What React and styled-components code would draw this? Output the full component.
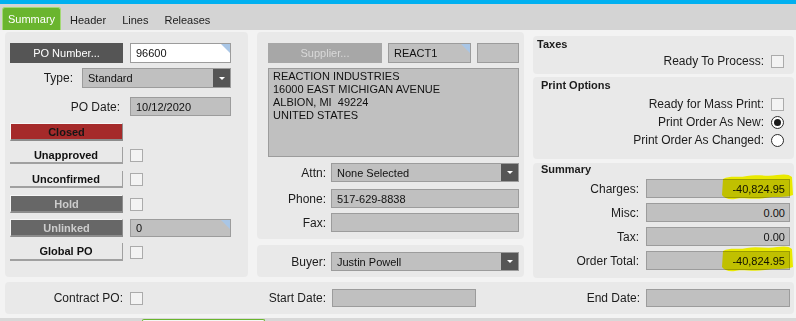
import React from "react";
import styled, { createGlobalStyle, css } from "styled-components";

const GlobalStyle = createGlobalStyle`
  html, body { margin: 0; padding: 0; background: #f3f3f3; overflow: hidden; }
  body { font-family: "Liberation Sans", Arial, sans-serif; color: #1c1c1c; }
  * { box-sizing: border-box; }
`;

const Page = styled.div`
  width: 796px;
  height: 321px;
  display: flex;
  flex-direction: column;
  background: #f3f3f3;
  overflow: hidden;
`;

const TopStripe = styled.div`
  flex: none;
  height: 4px;
  background: #00b0f0;
`;

const TabBar = styled.div`
  flex: none;
  height: 26px;
  background: #d4d4d4;
  display: flex;
  align-items: flex-end;
  padding-left: 2px;
`;

const Tab = styled.div`
  height: 23px;
  display: flex;
  align-items: center;
  font-size: 11px;
  padding: ${(p) => (p.$active ? "0 5px" : "3px 8px 0")};
  color: ${(p) => (p.$active ? "#ffffff" : "#1c1c1c")};
  ${(p) =>
    p.$active &&
    css`
      background: #6ab52e;
      border: 1px solid #a3d975;
      border-bottom: none;
      border-radius: 3px 3px 0 0;
      margin-right: 1px;
    `}
`;

const Content = styled.div`
  flex: none;
  padding: 2px 2px 4px 5px;
`;

const Columns = styled.div`
  display: grid;
  grid-template-columns: 243px 267px 261px;
  column-gap: 9px;
  align-items: start;
`;

const Panel = styled.div`
  background: #e9e9e9;
  border-radius: 4px;
  height: ${(p) => p.$h}px;
  padding: ${(p) => p.$pad || "0"};
  margin-top: ${(p) => p.$mt || 0}px;
`;

const Stack = styled.div`
  display: flex;
  flex-direction: column;
  gap: ${(p) => p.$gap || 0}px;
  padding-top: ${(p) => p.$pt || 0}px;
`;

const Row = styled.div`
  display: flex;
  align-items: center;
  gap: ${(p) => p.$gap ?? 7}px;
  height: ${(p) => p.$h ?? 18}px;
  margin-top: ${(p) => p.$mt ?? 0}px;
  justify-content: ${(p) => (p.$end ? "flex-end" : "flex-start")};
  padding-right: ${(p) => p.$pr ?? 0}px;
  padding-left: ${(p) => p.$pl ?? 0}px;
`;

const Label = styled.div`
  flex: none;
  width: ${(p) => (p.$w ? `${p.$w}px` : "auto")};
  padding-right: ${(p) => p.$pr ?? 0}px;
  text-align: right;
  font-size: 12px;
  color: #1c1c1c;
  white-space: nowrap;
`;

const Field = styled.div`
  position: relative;
  flex: none;
  width: ${(p) => p.$w}px;
  height: 100%;
  background: ${(p) => (p.$white ? "#ffffff" : "#c0c0c0")};
  border: 1px solid #9c9c9c;
  font-size: 11px;
  color: #111;
  display: flex;
  align-items: center;
  justify-content: ${(p) => (p.$right ? "flex-end" : "flex-start")};
  padding: ${(p) => (p.$right ? "0 4px 0 4px" : "0 0 0 5px")};
  white-space: nowrap;
  ${(p) =>
    p.$corner &&
    css`
      &::after {
        content: "";
        position: absolute;
        top: 0;
        right: 0;
        border-style: solid;
        border-width: 0 9px 9px 0;
        border-color: transparent #a9c6e6 transparent transparent;
      }
    `}
`;

const SelectArrow = styled.span`
  margin-left: auto;
  width: 17px;
  height: 100%;
  background: #555555;
  display: flex;
  align-items: center;
  justify-content: center;
  &::before {
    content: "";
    border-left: 3px solid transparent;
    border-right: 3px solid transparent;
    border-top: 3px solid #ffffff;
  }
`;

const buttonVariants = {
  dark: css`
    background: #555555;
    color: #ffffff;
  `,
  disabled: css`
    background: #a7a7a7;
    color: #d9d9d9;
  `,
  red: css`
    background: #a52a2a;
    color: #161616;
    font-weight: bold;
    border-top: 1px solid #f6f6f6;
    border-left: 1px solid #f6f6f6;
    border-right: 1px solid #8c8c8c;
    border-bottom: 2px solid #8c8c8c;
  `,
  light: css`
    background: #e9e9e9;
    color: #111111;
    font-weight: bold;
    border-right: 1px solid #a0a0a0;
    border-bottom: 2px solid #a0a0a0;
  `,
  gray: css`
    background: #676767;
    color: #cdcdcd;
    font-weight: bold;
    border-top: 1px solid #f6f6f6;
    border-left: 1px solid #f6f6f6;
    border-right: 1px solid #8c8c8c;
    border-bottom: 2px solid #8c8c8c;
  `,
};

const ActionButton = styled.div`
  flex: none;
  width: ${(p) => p.$w}px;
  height: 100%;
  display: flex;
  align-items: center;
  justify-content: center;
  font-size: 11px;
  white-space: nowrap;
  ${(p) => buttonVariants[p.$variant]}
`;

const Check = styled.span`
  flex: none;
  width: 13px;
  height: 13px;
  background: #f3f3f3;
  border: 1px solid #ababab;
`;

const Radio = styled.span`
  flex: none;
  width: 13px;
  height: 13px;
  border-radius: 50%;
  border: 1px solid #2a2a2a;
  background: #ffffff;
  display: flex;
  align-items: center;
  justify-content: center;
  &::after {
    content: "";
    width: 7px;
    height: 7px;
    border-radius: 50%;
    background: #1a1a1a;
    display: ${(p) => (p.$on ? "block" : "none")};
  }
`;

const AddressBox = styled.div`
  width: 251px;
  height: 89px;
  margin-top: 5px;
  background: #c0c0c0;
  border: 1px solid #9c9c9c;
  padding: 1px 4px;
  font-size: 11px;
  line-height: 13px;
  color: #111;
`;

const SectionTitle = styled.div`
  font-size: 11px;
  font-weight: bold;
  line-height: 13px;
  padding-left: ${(p) => p.$pl}px;
  color: #1c1c1c;
`;

const Highlight = styled.svg`
  position: absolute;
  left: ${(p) => p.$left}px;
  top: ${(p) => p.$top}px;
  width: ${(p) => p.$w}px;
  height: ${(p) => p.$h}px;
  overflow: visible;
  mix-blend-mode: multiply;
  pointer-events: none;
`;

const BottomBar = styled.div`
  margin-top: 4px;
  height: 32px;
  background: #e9e9e9;
  border-radius: 4px;
  display: grid;
  grid-template-columns: 243px 267px 261px;
  column-gap: 9px;
  align-items: center;
`;

const FooterStrip = styled.div`
  flex: 1;
  background: #d8d8d8;
  padding-left: 142px;
  padding-top: 1px;
`;

const FooterTab = styled.div`
  width: 123px;
  height: 100%;
  border: 1px solid #6ab52e;
  border-bottom: none;
  background: #f6f6f6;
  border-radius: 2px 2px 0 0;
`;

function Marker({ left, top, w, h }) {
  return (
    <Highlight $left={left} $top={top} $w={w} $h={h} viewBox={`0 0 ${w} ${h}`}>
      <path
        d={`M2,6 C9,2 17,5 26,3 C36,1 46,4 56,2 C63,1 ${w - 4},1 ${w - 1},4 L${w},${h - 5} C${w - 8},${h - 2} ${w - 18},${h - 4} ${w - 28},${h - 2} C${w - 40},${h} ${w - 52},${h - 3} 14,${h - 1} C8,${h} 3,${h - 2} 1,${h - 5} Z`}
        fill="#ffff00"
      />
    </Highlight>
  );
}

function StatusRow({ label, variant, mt, h = 18, children }) {
  return (
    <Row $mt={mt} $h={h}>
      <ActionButton $w={113} $variant={variant}>
        {label}
      </ActionButton>
      {children}
    </Row>
  );
}

function SummaryField({ label, value, mt, mark }) {
  return (
    <Row $end $pr={4} $h={19} $mt={mt}>
      <Label>{label}</Label>
      <Field $w={144} $right>
        {value}
        {mark && <Marker left={74} top={-7} w={72} h={27} />}
      </Field>
    </Row>
  );
}

export default function App() {
  return (
    <Page>
      <GlobalStyle />
      <TopStripe />
      <TabBar>
        <Tab $active>Summary</Tab>
        <Tab>Header</Tab>
        <Tab>Lines</Tab>
        <Tab>Releases</Tab>
      </TabBar>
      <Content>
        <Columns>
          <Panel $h={245} $pad="11px 0 0 5px">
            <Row $h={20}>
              <ActionButton $w={113} $variant="dark">
                PO Number...
              </ActionButton>
              <Field $w={101} $white $corner>
                96600
              </Field>
            </Row>
            <Row $h={20} $mt={5}>
              <Label $w={65} $pr={2}>
                Type:
              </Label>
              <Field $w={149}>
                Standard
                <SelectArrow />
              </Field>
            </Row>
            <Row $h={19} $mt={9}>
              <Label $w={113} $pr={3}>
                PO Date:
              </Label>
              <Field $w={101}>10/12/2020</Field>
            </Row>
            <StatusRow label="Closed" variant="red" mt={7} />
            <StatusRow label="Unapproved" variant="light" mt={6} h={17}>
              <Check />
            </StatusRow>
            <StatusRow label="Unconfirmed" variant="light" mt={7} h={17}>
              <Check />
            </StatusRow>
            <StatusRow label="Hold" variant="gray" mt={7}>
              <Check />
            </StatusRow>
            <StatusRow label="Unlinked" variant="gray" mt={6}>
              <Field $w={101} $corner>
                0
              </Field>
            </StatusRow>
            <StatusRow label="Global PO" variant="light" mt={6}>
              <Check />
            </StatusRow>
          </Panel>

          <Stack $gap={6}>
            <Panel $h={207} $pad="11px 0 0 11px">
              <Row $h={20} $gap={6}>
                <ActionButton $w={114} $variant="disabled">
                  Supplier...
                </ActionButton>
                <Field $w={83} $corner>
                  REACT1
                </Field>
                <Field $w={42} />
              </Row>
              <AddressBox>
                REACTION INDUSTRIES
                <br />
                16000 EAST MICHIGAN AVENUE
                <br />
                ALBION, MI&nbsp; 49224
                <br />
                UNITED STATES
              </AddressBox>
              <Row $h={19} $mt={6} $gap={5}>
                <Label $w={58}>Attn:</Label>
                <Field $w={188}>
                  None Selected
                  <SelectArrow />
                </Field>
              </Row>
              <Row $h={19} $mt={7} $gap={5}>
                <Label $w={58}>Phone:</Label>
                <Field $w={188}>517-629-8838</Field>
              </Row>
              <Row $h={19} $mt={5} $gap={5}>
                <Label $w={58}>Fax:</Label>
                <Field $w={188} />
              </Row>
            </Panel>
            <Panel $h={32} $pad="7px 0 0 11px">
              <Row $h={19} $gap={5}>
                <Label $w={58}>Buyer:</Label>
                <Field $w={188}>
                  Justin Powell
                  <SelectArrow />
                </Field>
              </Row>
            </Panel>
          </Stack>

          <Stack $pt={4}>
            <Panel $h={38} $pad="2px 0 0 0">
              <SectionTitle $pl={4}>Taxes</SectionTitle>
              <Row $end $pr={10} $mt={1}>
                <Label>Ready To Process:</Label>
                <Check />
              </Row>
            </Panel>
            <Panel $h={82} $pad="2px 0 0 0" $mt={3}>
              <SectionTitle $pl={8}>Print Options</SectionTitle>
              <Row $end $pr={10} $mt={3}>
                <Label>Ready for Mass Print:</Label>
                <Check />
              </Row>
              <Row $end $pr={10}>
                <Label>Print Order As New:</Label>
                <Radio $on />
              </Row>
              <Row $end $pr={10}>
                <Label>Print Order As Changed:</Label>
                <Radio />
              </Row>
            </Panel>
            <Panel $h={115} $pad="0" $mt={4}>
              <SectionTitle $pl={8}>Summary</SectionTitle>
              <SummaryField label="Charges:" value="-40,824.95" mt={3} mark />
              <SummaryField label="Misc:" value="0.00" mt={5} />
              <SummaryField label="Tax:" value="0.00" mt={5} />
              <SummaryField label="Order Total:" value="-40,824.95" mt={5} mark />
            </Panel>
          </Stack>
        </Columns>

        <BottomBar>
          <Row $pl={5} $h={18}>
            <Label $w={113}>Contract PO:</Label>
            <Check />
          </Row>
          <Row $pl={11} $h={18} $gap={6}>
            <Label $w={58}>Start Date:</Label>
            <Field $w={144} />
          </Row>
          <Row $end $pr={4} $h={18} $gap={6}>
            <Label>End Date:</Label>
            <Field $w={144} />
          </Row>
        </BottomBar>
      </Content>
      <FooterStrip>
        <FooterTab />
      </FooterStrip>
    </Page>
  );
}
